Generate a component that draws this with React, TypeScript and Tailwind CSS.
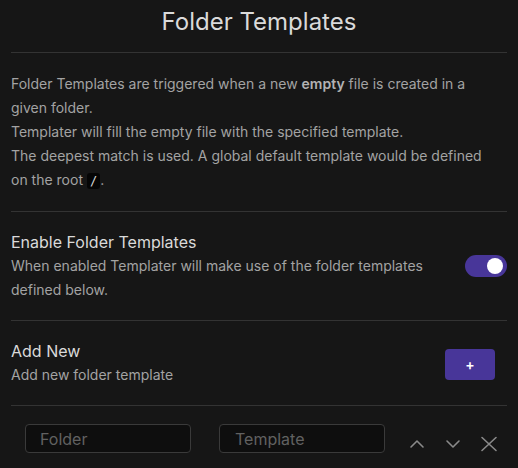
import React from 'react'

function Chevron({ up }: { up?: boolean }) {
    return (
        <svg width="24" height="24" viewBox="0 0 24 24" fill="none" stroke="currentColor" strokeWidth="1.6" strokeLinecap="round" strokeLinejoin="round">
            {up ? <path d="M6 15l6-6 6 6" /> : <path d="M6 9l6 6 6-6" />}
        </svg>
    )
}

function Cross() {
    return (
        <svg width="24" height="24" viewBox="0 0 24 24" fill="none" stroke="currentColor" strokeWidth="1.6" strokeLinecap="round">
            <path d="M5 5.5l14 13M19 5.5L5 18.5" />
        </svg>
    )
}

export default function App() {
    return (
        <div className="w-[518px] h-[468px] overflow-hidden bg-[#161616] px-[11px] text-[#dadada] font-['Inter',sans-serif]">

            {/* Header */}
            <div className="h-[53px] border-b border-[#333] flex items-start justify-center pt-[7px]">
                <h2 className="text-[24px] leading-[30px] text-[#dadada]">Folder Templates</h2>
            </div>

            {/* Intro */}
            <div className="pt-[19px] pb-[18px] border-b border-[#333]">
                <p className="max-w-[488px] text-[14px] leading-[24px] text-[#a3a3a3]">
                    Folder Templates are triggered when a new <b className="text-[#b3b3b3] font-semibold">empty</b> file is created in a given folder.
                    <br />
                    Templater will fill the empty file with the specified template.
                    <br />
                    The deepest match is used. A global default template would be defined on the root{' '}
                    <code className="bg-[#050505] text-[#dadada] rounded-[3px] px-[3px] py-[1px] font-['DejaVu_Sans_Mono',monospace] text-[12px]">/</code>.
                </p>
            </div>

            {/* Enable toggle */}
            <div className="flex items-center justify-between pt-[18px] pb-[18px] border-b border-[#333]">
                <div className="w-[430px]">
                    <div className="text-[16px] leading-[24px] text-[#dadada]">Enable Folder Templates</div>
                    <div className="text-[14px] leading-[24px] text-[#a3a3a3]">When enabled Templater will make use of the folder templates defined below.</div>
                </div>
                <div className="w-[42px] h-[22px] rounded-full bg-[#483699] flex items-center justify-end pr-[4px]">
                    <div className="w-[16px] h-[16px] rounded-full bg-white" />
                </div>
            </div>

            {/* Add new */}
            <div className="flex items-center justify-between pt-[18px] pb-[18px] border-b border-[#333]">
                <div>
                    <div className="text-[16px] leading-[24px] text-[#dadada]">Add New</div>
                    <div className="text-[14px] leading-[24px] text-[#a3a3a3]">Add new folder template</div>
                </div>
                <button className="w-[50px] h-[31px] mr-[12px] mt-[2px] rounded-[4px] bg-[#483699] text-white text-[14px] font-semibold">+</button>
            </div>

            {/* Folder template row */}
            <div className="flex items-start pl-[14px] pt-[18px]">
                <input placeholder="Folder" className="w-[166px] h-[29px] rounded-[4px] border border-[#3a3a3a] bg-[#0e0e0e] px-[14px] text-[16px] text-[#dadada] placeholder:text-[#616161] outline-none" />
                <input placeholder="Template" className="ml-[28px] w-[166px] h-[29px] rounded-[4px] border border-[#3a3a3a] bg-[#0e0e0e] px-[15px] text-[16px] text-[#dadada] placeholder:text-[#616161] outline-none" />
                <div className="ml-auto flex items-center gap-[12px] pr-[6px] pt-[8px] text-[#8a8a8a]">
                    <Chevron up />
                    <Chevron />
                    <Cross />
                </div>
            </div>

        </div>
    )
}
